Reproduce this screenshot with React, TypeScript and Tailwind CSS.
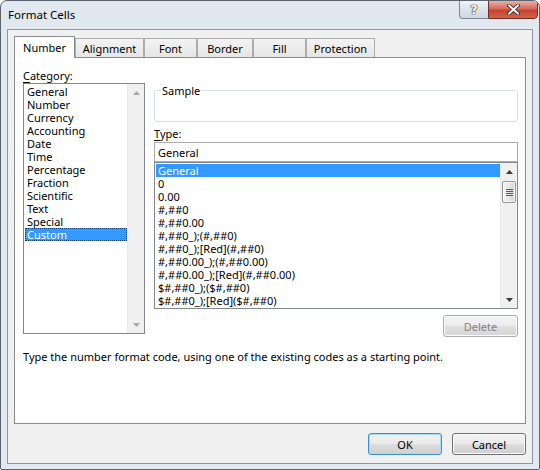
import React from "react";

const categories = [
  "General",
  "Number",
  "Currency",
  "Accounting",
  "Date",
  "Time",
  "Percentage",
  "Fraction",
  "Scientific",
  "Text",
  "Special",
  "Custom",
];

const types = [
  "General",
  "0",
  "0.00",
  "#,##0",
  "#,##0.00",
  "#,##0_);(#,##0)",
  "#,##0_);[Red](#,##0)",
  "#,##0.00_);(#,##0.00)",
  "#,##0.00_);[Red](#,##0.00)",
  "$#,##0_);($#,##0)",
  "$#,##0_);[Red]($#,##0)",
];

function Arrow({ up, color }: { up: boolean; color: string }) {
  return (
    <svg width="7" height="4" viewBox="0 0 7 4">
      <path d={up ? "M3.5 0 L7 4 L0 4Z" : "M0 0 L7 0 L3.5 4Z"} fill={color} />
    </svg>
  );
}

function ScrollBar({ enabled }: { enabled: boolean }) {
  const c = enabled ? "#3a3a3a" : "#a8a8a8";
  return (
    <div className="w-[17px] flex flex-col bg-[#f0f0f0] border-l border-[#eaeaea]">
      <div className="h-[17px] flex items-center justify-center">
        <Arrow up color={c} />
      </div>
      {enabled ? (
        <div className="mx-[1px] mt-[1px] h-[22px] rounded-[2px] border border-[#979797] bg-[linear-gradient(to_right,#f4f4f4,#e6e6e6_50%,#d5d5d5)] flex flex-col items-center justify-center gap-[1px] shadow-[inset_0_0_0_1px_#fbfbfb]">
          <div className="w-[7px] h-[1px] bg-[#5a5a5a]" />
          <div className="w-[7px] h-[1px] bg-[#5a5a5a]" />
          <div className="w-[7px] h-[1px] bg-[#5a5a5a]" />
          <div className="w-[7px] h-[1px] bg-[#5a5a5a]" />
        </div>
      ) : null}
      <div className="flex-1" />
      <div className="h-[17px] flex items-center justify-center">
        <Arrow up={false} color={c} />
      </div>
    </div>
  );
}

function Tab({ label, w, active }: { label: string; w: string; active?: boolean }) {
  if (active) {
    return (
      <div
        className={`${w} h-[22px] -mb-[1px] relative z-10 bg-white border border-b-0 border-[#898c95] flex items-start justify-center pt-[4px] leading-[14px]`}
      >
        {label}
      </div>
    );
  }
  return (
    <div
      className={`${w} h-[19px] bg-[linear-gradient(#f3f3f3,#e6e6e6)] border border-b-0 border-[#acacac] flex items-start justify-center pt-[3px] leading-[14px]`}
    >
      {label}
    </div>
  );
}

export default function App() {
  return (
    <div className="w-[540px] h-[470px] bg-white">
      <div className="w-[540px] h-[470px] flex flex-col border border-[#5b6570] rounded-t-[7px] rounded-b-[2px] bg-[#e2e8ef] font-['Noto_Sans',sans-serif] text-[11px] text-black overflow-hidden">
        {/* Title bar */}
        <div className="h-[28px] flex items-start justify-between">
          <div className="pl-[7px] h-[27px] flex items-center text-[11.5px] text-[#000]">Format Cells</div>
          <div className="flex mr-[1px] -mt-[1px]">
            <div className="w-[29px] h-[19px] border border-[#7b8794] border-r-0 rounded-bl-[4px] bg-[linear-gradient(#f2f5f8,#dde3ea_50%,#cfd7e0)] flex items-center justify-center">
              <span className="font-['DejaVu_Sans',sans-serif] font-bold text-[13px] leading-none text-white [text-shadow:0_0_1px_#222,0_0_1px_#222,0_0_1px_#222]">
                ?
              </span>
            </div>
            <div className="w-[50px] h-[19px] border border-[#7a2b22] rounded-br-[4px] bg-[linear-gradient(#eab1a6,#d66b5c_45%,#c5412f_55%,#d0644f)] flex items-center justify-center">
              <svg width="13" height="11" viewBox="0 0 13 11">
                <path d="M2 1.5 L11 9.5 M11 1.5 L2 9.5" stroke="#3b1a16" strokeWidth="3.6" strokeLinecap="square" />
                <path d="M2 1.5 L11 9.5 M11 1.5 L2 9.5" stroke="#ffffff" strokeWidth="2" strokeLinecap="square" />
              </svg>
            </div>
          </div>
        </div>

        {/* Client area */}
        <div className="mx-[6px] h-[435px] border border-[#8e959e] bg-[#f0f0f0] p-[6px] flex flex-col">
          {/* Tabs */}
          <div className="h-[21px] flex items-end">
            <Tab label="Number" w="w-[61px]" active />
            <Tab label="Alignment" w="w-[69px]" />
            <Tab label="Font" w="w-[53px]" />
            <Tab label="Border" w="w-[56px]" />
            <Tab label="Fill" w="w-[53px]" />
            <Tab label="Protection" w="w-[69px]" />
          </div>

          {/* Panel */}
          <div className="h-[367px] border border-[#898c95] bg-white pl-[8px] pt-[10px] flex flex-col">
            <div className="flex gap-[9px]">
              {/* Category column */}
              <div className="w-[122px] flex flex-col">
                <div className="leading-[15px] h-[15px]">
                  <span className="underline underline-offset-[2px]">C</span>ategory:
                </div>
                <div className="h-[251px] border border-[#828790] bg-white flex">
                  <div className="flex-1 pt-[1px] pl-[1px] flex flex-col">
                    {categories.map((c) => (
                      <div
                        key={c}
                        className={
                          c === "Custom"
                            ? "h-[13px] leading-[13px] pl-[2px] bg-[#3399ff] text-white whitespace-nowrap outline outline-1 outline-dotted outline-[#0d3f78] -outline-offset-1"
                            : "h-[13px] leading-[13px] pl-[2px] whitespace-nowrap"
                        }
                      >
                        {c}
                      </div>
                    ))}
                  </div>
                  <ScrollBar enabled={false} />
                </div>
              </div>

              {/* Right column */}
              <div className="w-[364px] flex flex-col">
                <div className="mt-[22px] h-[32px] border border-[#d5dfe5] rounded-[3px]">
                  <div className="-mt-[8px] ml-[6px] w-fit px-[1px] bg-white leading-[15px]">Sample</div>
                </div>
                <div className="mt-[4px] leading-[15px] h-[15px]">
                  <span className="underline underline-offset-[2px]">T</span>ype:
                </div>
                <div className="mt-[1px] h-[20px] border border-[#abadb3] bg-white pl-[3px] flex items-center leading-[15px]">
                  General
                </div>
                <div className="h-[147px] border border-[#828790] bg-white flex overflow-hidden">
                  <div className="flex-1 pt-[1px] pl-[1px] flex flex-col overflow-hidden">
                    {types.map((t, i) => (
                      <div
                        key={t}
                        className={
                          i === 0
                            ? "h-[13px] shrink-0 leading-[13px] pl-[2px] bg-[#3399ff] text-white whitespace-nowrap"
                            : "h-[13px] shrink-0 leading-[13px] pl-[2px] whitespace-nowrap"
                        }
                      >
                        {t}
                      </div>
                    ))}
                  </div>
                  <ScrollBar enabled />
                </div>
                <div className="mt-[6px] self-end w-[75px] h-[22px] rounded-[3px] border border-[#adadad] bg-[linear-gradient(#f4f4f4,#ececec_49%,#e0e0e0_50%,#d6d6d6)] shadow-[inset_0_0_0_1px_#fafafa] flex items-center justify-center text-[#838383] leading-[15px]">
                  Delete
                </div>
              </div>
            </div>
            <div className="mt-[12px] leading-[15px]">
              Type the number format code, using one of the existing codes as a starting point.
            </div>
          </div>

          {/* Buttons */}
          <div className="mt-[9px] flex justify-end gap-[10px]">
            <div className="w-[74px] h-[22px] rounded-[3px] border border-[#3c8fd6] bg-[linear-gradient(#f2f2f2,#ebebeb_49%,#dddddd_50%,#cfcfcf)] shadow-[inset_0_0_0_1px_#a6dcf8] flex items-center justify-center leading-[15px]">
              OK
            </div>
            <div className="w-[74px] h-[22px] rounded-[3px] border border-[#707070] bg-[linear-gradient(#f2f2f2,#ebebeb_49%,#dddddd_50%,#cfcfcf)] shadow-[inset_0_0_0_1px_#fbfbfb] flex items-center justify-center leading-[15px]">
              Cancel
            </div>
          </div>
        </div>
      </div>
    </div>
  );
}
